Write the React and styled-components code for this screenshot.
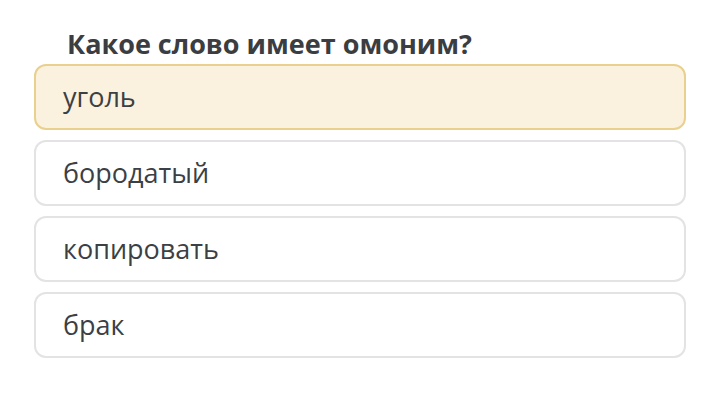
import React from 'react';
import styled, { createGlobalStyle } from 'styled-components';

const GlobalStyle = createGlobalStyle`
  html, body {
    margin: 0;
    padding: 0;
    background: #ffffff;
  }
  body {
    font-family: "Open Sans", "Liberation Sans", sans-serif;
  }
`;

const Quiz = styled.section`
  width: 720px;
  height: 401px;
  box-sizing: border-box;
  padding: 28px 34px 0 34px;
  display: flex;
  flex-direction: column;
`;

const Question = styled.h2`
  margin: 0 0 4px 33px;
  font-size: 27px;
  line-height: 32px;
  font-weight: 700;
  color: #3a3d42;
`;

const Options = styled.div`
  display: flex;
  flex-direction: column;
  gap: 10px;
`;

const Option = styled.div`
  height: 66px;
  box-sizing: border-box;
  border-radius: 12px;
  border: 2px solid ${(props) => (props.selected ? '#e9d08e' : '#e3e3e3')};
  background: ${(props) => (props.selected ? '#faf1df' : '#ffffff')};
  display: flex;
  align-items: center;
  padding: 0 0 2px 27px;
  font-size: 27px;
  color: #3c3f44;
`;

const answers = ['уголь', 'бородатый', 'копировать', 'брак'];

export default function App() {
  return (
    <>
      <GlobalStyle />
      <Quiz>
        <Question>Какое слово имеет омоним?</Question>
        <Options>
          {answers.map((a, i) => (
            <Option key={a} selected={i === 0}>{a}</Option>
          ))}
        </Options>
      </Quiz>
    </>
  );
}
